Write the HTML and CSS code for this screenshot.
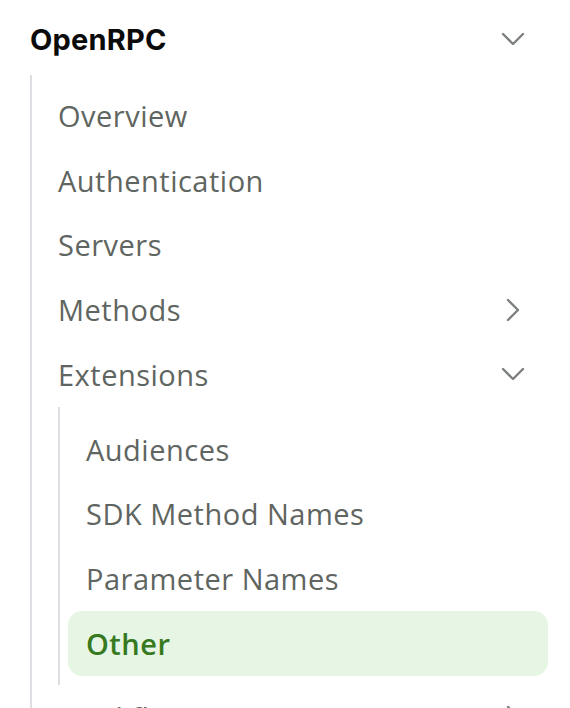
FILE: index.html
```html
<!DOCTYPE html>
<html lang="en">
<head>
<meta charset="utf-8">
<link rel="stylesheet" href="styles.css">
</head>
<body>
<nav class="sidebar">
  <div class="section-head">
    <span class="section-title">OpenRPC</span>
    <svg class="chev" width="24" height="24" viewBox="0 0 24 24"><path d="M2 7 L12 17 L22 7" /></svg>
  </div>
  <ul class="tree">
    <li class="item"><span>Overview</span></li>
    <li class="item"><span>Authentication</span></li>
    <li class="item"><span>Servers</span></li>
    <li class="item"><span>Methods</span>
      <svg class="chev" width="24" height="24" viewBox="0 0 24 24"><path d="M7 2 L17 12 L7 22" /></svg>
    </li>
    <li class="item"><span>Extensions</span>
      <svg class="chev" width="24" height="24" viewBox="0 0 24 24"><path d="M2 7 L12 17 L22 7" /></svg>
    </li>
    <li class="sub">
      <ul class="tree nested">
        <li class="item"><span>Audiences</span></li>
        <li class="item"><span>SDK Method Names</span></li>
        <li class="item"><span>Parameter Names</span></li>
        <li class="item active"><span>Other</span></li>
      </ul>
    </li>
    <li class="item"><span>Workflows &amp; Arazzo</span>
      <svg class="chev" width="24" height="24" viewBox="0 0 24 24"><path d="M7 2 L17 12 L7 22" /></svg>
    </li>
  </ul>
</nav>
</body>
</html>
```
FILE: styles.css
```css
html, body {
  margin: 0;
  padding: 0;
  background: #ffffff;
  overflow: hidden;
}
body {
  font-family: "Open Sans", "Liberation Sans", sans-serif;
  height: 708px;
}
.sidebar {
  padding: 16px 0 0 30px;
  width: 518px;
}
.section-head {
  display: flex;
  align-items: center;
  justify-content: space-between;
  height: 46px;
  padding-right: 23px;
}
.section-title {
  font-family: "Inter", "Liberation Sans", sans-serif;
  font-weight: 700;
  font-size: 29px;
  color: #0b0b0b;
  letter-spacing: 0.2px;
}
.chev {
  width: 24px;
  height: 24px;
  flex: none;
}
.chev path {
  fill: none;
  stroke: #7b817c;
  stroke-width: 2.4;
  stroke-linecap: round;
  stroke-linejoin: round;
}
.tree {
  list-style: none;
  margin: 13px 0 0 0;
  padding: 8px 0 0 0;
  border-left: 2px solid #dedde3;
}
.tree > .item {
  display: flex;
  align-items: center;
  justify-content: space-between;
  height: 64.75px;
  padding-left: 26px;
  padding-right: 23px;
  font-size: 29px;
  color: #5f6560;
  letter-spacing: 0.5px;
}
.tree > .sub {
  padding-left: 26px;
}
.nested {
  margin-top: 0;
  padding-top: 10px;
  padding-bottom: 9px;
  padding-right: 0;
}
.nested > .item {
  margin-left: 8px;
  padding-left: 18px;
  border-radius: 14px;
}
.nested > .item.active {
  background: #e7f5e4;
  color: #36791e;
  font-weight: 600;
}
```
